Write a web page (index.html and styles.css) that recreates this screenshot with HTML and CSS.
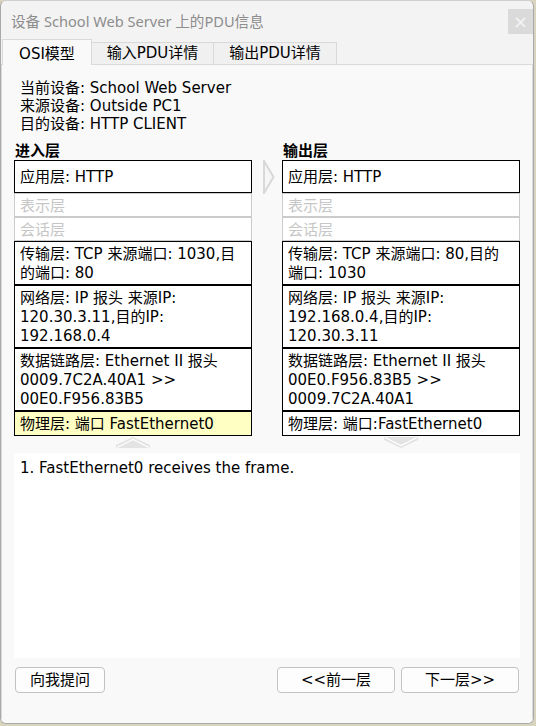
FILE: index.html
```html
<!DOCTYPE html>
<html lang="zh">
<head>
<meta charset="utf-8">
<title>PDU信息</title>
<link rel="stylesheet" href="styles.css">
</head>
<body>
<div class="window">
  <div class="titlebar">
    <span class="title">设备 School Web Server 上的PDU信息</span>
    <span class="close">×</span>
  </div>
  <div class="tabs">
    <div class="tab active t1">OSI模型</div>
    <div class="tab t2">输入PDU详情</div>
    <div class="tab t3">输出PDU详情</div>
  </div>
  <div class="panel">
    <div class="info">
      <div>当前设备: School Web Server</div>
      <div>来源设备: Outside PC1</div>
      <div>目的设备: HTTP CLIENT</div>
    </div>
    <div class="layers">
      <div class="col">
        <div class="col-head">进入层</div>
        <div class="box app">应用层: HTTP</div>
        <div class="box off">表示层</div>
        <div class="box off">会话层</div>
        <div class="box">传输层: TCP 来源端口: 1030,目<br>的端口: 80</div>
        <div class="box">网络层: IP 报头 来源IP:<br>120.30.3.11,目的IP:<br>192.168.0.4</div>
        <div class="box">数据链路层: Ethernet II 报头<br>0009.7C2A.40A1 &gt;&gt;<br>00E0.F956.83B5</div>
        <div class="box hl">物理层: 端口 FastEthernet0</div>
        <div class="chev">
          <svg width="34" height="11" viewBox="0 0 34 11"><polygon points="0,11 0,8 17,0 34,8 34,11" fill="#e3e3e3"/><polyline points="1,10.5 17,2.5 33,10.5" fill="none" stroke="#ffffff" stroke-width="1.2"/></svg>
        </div>
      </div>
      <div class="mid">
        <svg width="12" height="34" viewBox="0 0 12 34"><polygon points="1,1 10.5,17 1,33" fill="#f6f6f6" stroke="#d8d8d8" stroke-width="2"/></svg>
      </div>
      <div class="col">
        <div class="col-head">输出层</div>
        <div class="box app">应用层: HTTP</div>
        <div class="box off">表示层</div>
        <div class="box off">会话层</div>
        <div class="box">传输层: TCP 来源端口: 80,目的<br>端口: 1030</div>
        <div class="box">网络层: IP 报头 来源IP:<br>192.168.0.4,目的IP:<br>120.30.3.11</div>
        <div class="box">数据链路层: Ethernet II 报头<br>00E0.F956.83B5 &gt;&gt;<br>0009.7C2A.40A1</div>
        <div class="box">物理层: 端口:FastEthernet0</div>
        <div class="chev">
          <svg width="34" height="11" viewBox="0 0 34 11"><polygon points="0,0 34,0 34,3 17,11 0,3" fill="#e3e3e3"/><polyline points="1,0.5 17,8.5 33,0.5" fill="none" stroke="#ffffff" stroke-width="1.2"/></svg>
        </div>
      </div>
    </div>
    <div class="desc">1. FastEthernet0 receives the frame.</div>
    <div class="buttons">
      <div class="btn ask">向我提问</div>
      <div class="btn nav">&lt;&lt;前一层</div>
      <div class="btn nav">下一层&gt;&gt;</div>
    </div>
  </div>
</div>
</body>
</html>
```
FILE: styles.css
```css
* { box-sizing: border-box; }
html, body {
  margin: 0;
  width: 536px;
  height: 726px;
  overflow: hidden;
}
body {
  background: #d8d4bd;
  font-family: "DejaVu Sans", "Noto Sans CJK SC", sans-serif;
  font-size: 15px;
  color: #000;
}
.window {
  width: 534px;
  height: 724px;
  background: #f3f3f3;
  border: 1px solid #a9a9a9;
  border-top-color: #cfcfcf;
  border-radius: 6px;
  display: flex;
  flex-direction: column;
  overflow: hidden;
}
.titlebar {
  height: 38px;
  flex: none;
  display: flex;
  align-items: flex-start;
}
.title {
  font-family: "Noto Sans", "Noto Sans CJK SC", sans-serif;
  font-size: 14.6px;
  line-height: 20px;
  color: #8d8d8d;
  padding: 10px 0 0 10px;
}
.close {
  margin-left: auto;
  margin-top: 8px;
  width: 25px;
  height: 25px;
  background: #dadada;
  color: #f4f4f4;
  font-size: 18px;
  line-height: 25px;
  text-align: center;
}
.tabs {
  height: 25px;
  flex: none;
  display: flex;
  align-items: flex-end;
  padding-left: 1px;
}
.tab {
  height: 22px;
  border: 1px solid #d9d9d9;
  border-bottom: none;
  background: #f0f0f0;
  line-height: 20px;
  text-align: center;
  margin-left: -1px;
  white-space: nowrap;
}
.tab.active {
  height: 26px;
  margin-bottom: -1px;
  padding-top: 4px;
  background: #f9f9f9;
  position: relative;
  z-index: 1;
  margin-left: 0;
}
.t1 { width: 90px; }
.t2 { width: 123px; }
.t3 { width: 124px; }
.panel {
  flex: 1;
  background: #f9f9f9;
  border: 1px solid #dadada;
  border-bottom: none;
  padding: 14px 12px 0 12px;
}
.info {
  padding-left: 6px;
  line-height: 18px;
}
.layers {
  display: grid;
  grid-template-columns: 238px 30px 238px;
  margin-top: 10px;
}
.col {
  display: flex;
  flex-direction: column;
}
.col-head {
  font-weight: bold;
  height: 17px;
  line-height: 17px;
  padding-left: 1px;
}
.box {
  border: 1px solid #000;
  background: #fff;
  padding: 3px 5px 1px;
  line-height: 19px;
  white-space: nowrap;
}
.box.app {
  padding: 7px 5px 5px;
}
.box.off {
  border-color: #cbcbcb;
  color: #c6c6c6;
  padding: 3px 5px 0;
}
.box.hl {
  background: #ffffc4;
}
.chev {
  height: 17px;
  display: flex;
  justify-content: center;
  padding-top: 1px;
}
.chev svg { display: block; }
.mid {
  padding: 17px 0 0 11px;
}
.mid svg { display: block; }
.desc {
  background: #fff;
  height: 205px;
  padding: 6px 6px 4px;
  line-height: 18px;
}
.buttons {
  display: flex;
  gap: 6px;
  margin-top: 9px;
  padding: 0 1px;
}
.btn {
  height: 26px;
  border: 1px solid #c3c3c3;
  border-radius: 4px;
  background: #fdfdfd;
  line-height: 24px;
  text-align: center;
  white-space: nowrap;
}
.btn.ask {
  width: 90px;
  margin-right: auto;
}
.btn.nav {
  width: 118px;
}
```
